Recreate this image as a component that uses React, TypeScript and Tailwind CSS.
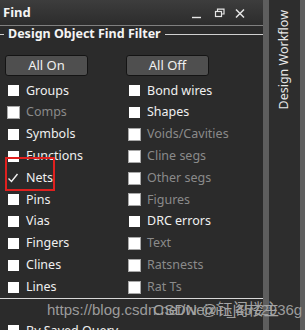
import React, { useState } from 'react';

type Item = { label: string; enabled: boolean; checked?: boolean };

const leftItems: Item[] = [
  { label: 'Groups', enabled: true },
  { label: 'Comps', enabled: false },
  { label: 'Symbols', enabled: true },
  { label: 'Functions', enabled: true },
  { label: 'Nets', enabled: true, checked: true },
  { label: 'Pins', enabled: true },
  { label: 'Vias', enabled: true },
  { label: 'Fingers', enabled: true },
  { label: 'Clines', enabled: true },
  { label: 'Lines', enabled: true },
];

const rightItems: Item[] = [
  { label: 'Bond wires', enabled: true },
  { label: 'Shapes', enabled: true },
  { label: 'Voids/Cavities', enabled: false },
  { label: 'Cline segs', enabled: false },
  { label: 'Other segs', enabled: false },
  { label: 'Figures', enabled: false },
  { label: 'DRC errors', enabled: true },
  { label: 'Text', enabled: false },
  { label: 'Ratsnests', enabled: false },
  { label: 'Rat Ts', enabled: false },
];

const CheckRow: React.FC<{ item: Item; checked: boolean; onToggle: () => void }> = ({ item, checked, onToggle }) => (
  <button
    onClick={item.enabled ? onToggle : undefined}
    className="flex h-[21.8px] shrink-0 items-center text-left"
  >
    <span className="flex w-[19px] shrink-0 items-center justify-start">
      {checked ? (
        <svg width="12" height="12" viewBox="0 0 12 12">
          <path d="M1.5 6.5 L4.5 9.5 L10.5 2" fill="none" stroke="#f2f2f2" strokeWidth="1.4" />
        </svg>
      ) : item.enabled ? (
        <span className="ml-[1px] block h-[11px] w-[11px] bg-white" />
      ) : (
        <span className="block h-[13px] w-[13px] border border-[#a8a8a8] bg-white" />
      )}
    </span>
    <span className={item.enabled ? 'text-[#f0f0f0]' : 'text-[#8a8a8a]'}>{item.label}</span>
  </button>
);

export default function App() {
  const [checked, setChecked] = useState<Record<string, boolean>>({ Nets: true });
  const toggle = (k: string) => setChecked(c => ({ ...c, [k]: !c[k] }));

  return (
    <div className="flex h-[330px] w-[305px] overflow-hidden bg-[#2b2b2b] font-['Noto_Sans',sans-serif] text-[12.5px] leading-none">
      <div className="relative w-[263px] shrink-0">
        {/* title bar */}
        <div className="flex h-[26px] items-center border-b border-[#808080] bg-gradient-to-b from-[#3d3d3d] to-[#2c2c2c] pl-[3px] pr-[15px]">
          <span className="flex-1 text-[13px] font-bold text-[#f4f4f4]">Find</span>
          <svg width="60" height="14" viewBox="0 0 60 14">
            <path d="M4 11.5 H13" stroke="#e6e6e6" strokeWidth="1.4" />
            <rect x="27.5" y="5.5" width="6" height="5" fill="none" stroke="#e6e6e6" strokeWidth="1.2" />
            <path d="M29.5 5.5 V3.2 H36 V8 H33.5" fill="none" stroke="#e6e6e6" strokeWidth="1.2" />
            <path d="M48 3.5 L56 11.5 M56 3.5 L48 11.5" stroke="#e6e6e6" strokeWidth="1.5" />
          </svg>
        </div>

        {/* section header */}
        <div className="flex h-[17px] items-center">
          <span className="h-px w-[4px] bg-[#d0d0d0]" />
          <span className="px-[4px] text-[12.5px] font-bold text-[#f4f4f4]">Design Object Find Filter</span>
          <span className="h-px flex-1 bg-[#d0d0d0]" />
        </div>

        {/* buttons */}
        <div className="mt-[12px] flex gap-[38px] pl-[5px]">
          <button className="h-[21px] w-[83px] rounded-[3px] border border-[#141414] bg-[#4f4f4f] text-[13px] text-[#f0f0f0]">All On</button>
          <button className="h-[21px] w-[83px] rounded-[3px] border border-[#141414] bg-[#4f4f4f] text-[13px] text-[#f0f0f0]">All Off</button>
        </div>

        {/* checkbox grid */}
        <div className="mt-[4px] grid grid-cols-[121px_1fr] pl-[7px]">
          <div className="flex flex-col">
            {leftItems.map(it => (
              <CheckRow key={it.label} item={it} checked={!!checked[it.label]} onToggle={() => toggle(it.label)} />
            ))}
          </div>
          <div className="flex flex-col">
            {rightItems.map(it => (
              <CheckRow key={it.label} item={it} checked={!!checked[it.label]} onToggle={() => toggle(it.label)} />
            ))}
          </div>
        </div>

        <div className="h-px bg-[#d8d8d8]" />
        <div className="mt-[21px] pl-[7px]">
          <CheckRow item={{ label: 'By Saved Query', enabled: true }} checked={false} onToggle={() => {}} />
        </div>

        {/* annotation around Nets */}
        <div className="absolute left-[5px] top-[157px] h-[34px] w-[50px] border-2 border-[#e0201f]" />
      </div>

      {/* docked tab strip */}
      <div className="w-[6px] shrink-0 bg-[#5e5e5e]" />
      <div className="flex w-[31px] shrink-0 justify-center bg-[#2d2d2d] pt-[10px]">
        <span className="h-fit rotate-180 text-[12.5px] text-[#e8e8e8] [writing-mode:vertical-rl]">Design Workflow</span>
      </div>
      <div className="w-[5px] shrink-0 bg-[#5e5e5e]" />

      {/* watermark */}
      <div className="pointer-events-none absolute left-[47px] top-[302px] font-['Liberation_Sans','Noto_Sans_CJK_SC',sans-serif] text-[15px] text-[#9c9c9c]">
        https://blog.csdn.net/weixin_4572936g
      </div>
      <div className="pointer-events-none absolute left-[153px] top-[302px] font-['Liberation_Sans','Noto_Sans_CJK_SC',sans-serif] text-[15.5px] text-[#a4a4a4]">
        CSDN @钰阁楼主
      </div>
    </div>
  );
}
